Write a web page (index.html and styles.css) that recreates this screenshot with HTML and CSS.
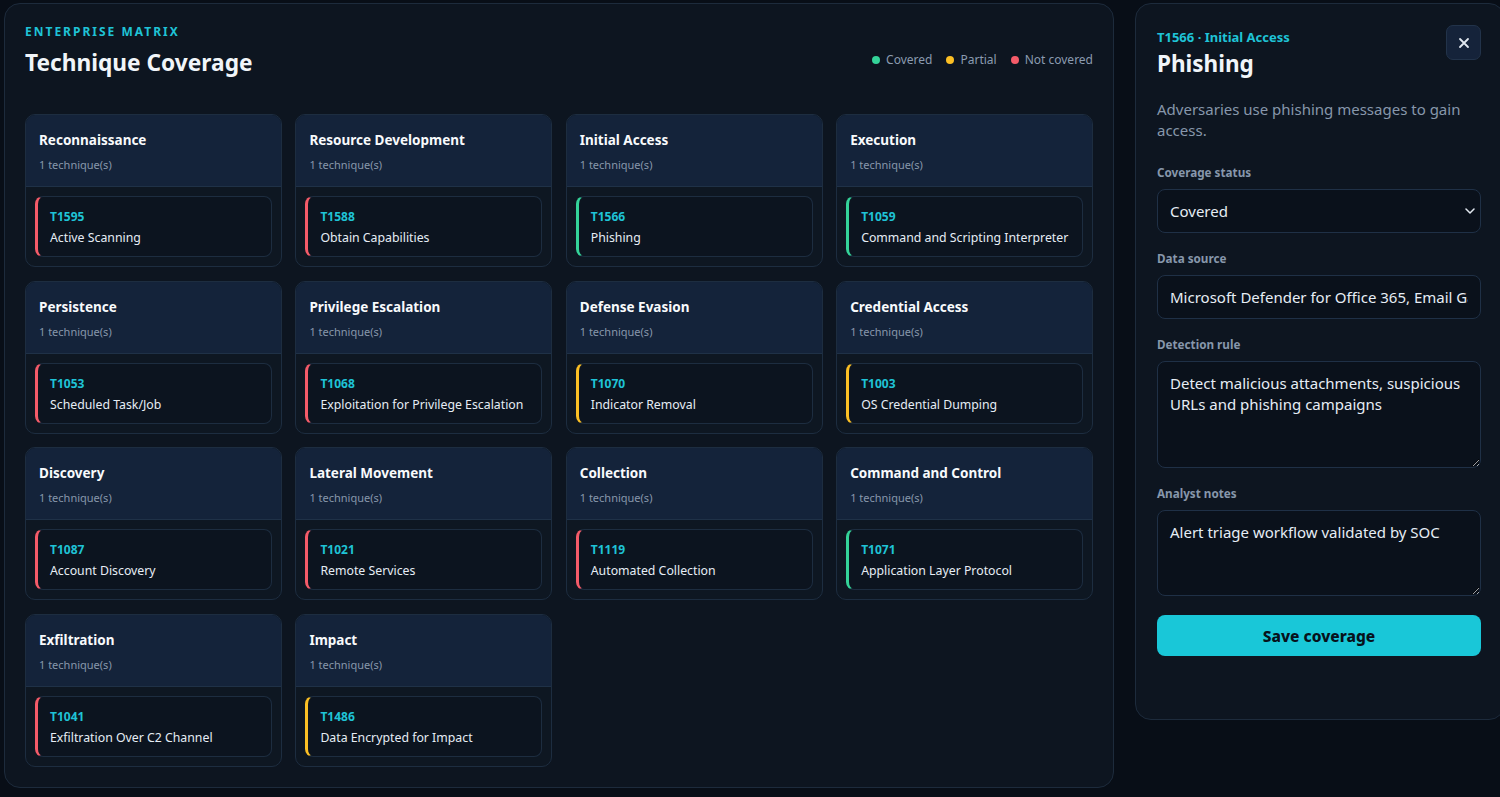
FILE: index.html
```html
<!DOCTYPE html>
<html lang="en">
<head>
<meta charset="utf-8">
<title>Technique Coverage</title>
<link rel="stylesheet" href="styles.css">
</head>
<body>
<div class="layout">
  <main class="matrix">
    <header class="matrix-head">
      <div class="titles">
        <div class="eyebrow">ENTERPRISE MATRIX</div>
        <h1 class="title">Technique Coverage</h1>
      </div>
      <ul class="legend">
        <li><span class="dot dot-green"></span>Covered</li>
        <li><span class="dot dot-yellow"></span>Partial</li>
        <li><span class="dot dot-red"></span>Not covered</li>
      </ul>
    </header>
    <section class="grid">
      <div class="tactic">
        <div class="tactic-head"><div class="tactic-name">Reconnaissance</div><div class="tactic-count">1 technique(s)</div></div>
        <div class="tactic-body"><div class="tech st-red"><div class="tech-id">T1595</div><div class="tech-name">Active Scanning</div></div></div>
      </div>
      <div class="tactic">
        <div class="tactic-head"><div class="tactic-name">Resource Development</div><div class="tactic-count">1 technique(s)</div></div>
        <div class="tactic-body"><div class="tech st-red"><div class="tech-id">T1588</div><div class="tech-name">Obtain Capabilities</div></div></div>
      </div>
      <div class="tactic">
        <div class="tactic-head"><div class="tactic-name">Initial Access</div><div class="tactic-count">1 technique(s)</div></div>
        <div class="tactic-body"><div class="tech st-green"><div class="tech-id">T1566</div><div class="tech-name">Phishing</div></div></div>
      </div>
      <div class="tactic">
        <div class="tactic-head"><div class="tactic-name">Execution</div><div class="tactic-count">1 technique(s)</div></div>
        <div class="tactic-body"><div class="tech st-green"><div class="tech-id">T1059</div><div class="tech-name">Command and Scripting Interpreter</div></div></div>
      </div>
      <div class="tactic">
        <div class="tactic-head"><div class="tactic-name">Persistence</div><div class="tactic-count">1 technique(s)</div></div>
        <div class="tactic-body"><div class="tech st-red"><div class="tech-id">T1053</div><div class="tech-name">Scheduled Task/Job</div></div></div>
      </div>
      <div class="tactic">
        <div class="tactic-head"><div class="tactic-name">Privilege Escalation</div><div class="tactic-count">1 technique(s)</div></div>
        <div class="tactic-body"><div class="tech st-red"><div class="tech-id">T1068</div><div class="tech-name">Exploitation for Privilege Escalation</div></div></div>
      </div>
      <div class="tactic">
        <div class="tactic-head"><div class="tactic-name">Defense Evasion</div><div class="tactic-count">1 technique(s)</div></div>
        <div class="tactic-body"><div class="tech st-yellow"><div class="tech-id">T1070</div><div class="tech-name">Indicator Removal</div></div></div>
      </div>
      <div class="tactic">
        <div class="tactic-head"><div class="tactic-name">Credential Access</div><div class="tactic-count">1 technique(s)</div></div>
        <div class="tactic-body"><div class="tech st-yellow"><div class="tech-id">T1003</div><div class="tech-name">OS Credential Dumping</div></div></div>
      </div>
      <div class="tactic">
        <div class="tactic-head"><div class="tactic-name">Discovery</div><div class="tactic-count">1 technique(s)</div></div>
        <div class="tactic-body"><div class="tech st-red"><div class="tech-id">T1087</div><div class="tech-name">Account Discovery</div></div></div>
      </div>
      <div class="tactic">
        <div class="tactic-head"><div class="tactic-name">Lateral Movement</div><div class="tactic-count">1 technique(s)</div></div>
        <div class="tactic-body"><div class="tech st-red"><div class="tech-id">T1021</div><div class="tech-name">Remote Services</div></div></div>
      </div>
      <div class="tactic">
        <div class="tactic-head"><div class="tactic-name">Collection</div><div class="tactic-count">1 technique(s)</div></div>
        <div class="tactic-body"><div class="tech st-red"><div class="tech-id">T1119</div><div class="tech-name">Automated Collection</div></div></div>
      </div>
      <div class="tactic">
        <div class="tactic-head"><div class="tactic-name">Command and Control</div><div class="tactic-count">1 technique(s)</div></div>
        <div class="tactic-body"><div class="tech st-green"><div class="tech-id">T1071</div><div class="tech-name">Application Layer Protocol</div></div></div>
      </div>
      <div class="tactic">
        <div class="tactic-head"><div class="tactic-name">Exfiltration</div><div class="tactic-count">1 technique(s)</div></div>
        <div class="tactic-body"><div class="tech st-red"><div class="tech-id">T1041</div><div class="tech-name">Exfiltration Over C2 Channel</div></div></div>
      </div>
      <div class="tactic">
        <div class="tactic-head"><div class="tactic-name">Impact</div><div class="tactic-count">1 technique(s)</div></div>
        <div class="tactic-body"><div class="tech st-yellow"><div class="tech-id">T1486</div><div class="tech-name">Data Encrypted for Impact</div></div></div>
      </div>
    </section>
  </main>

  <aside class="detail">
    <div class="detail-head">
      <div>
        <div class="detail-meta">T1566 · Initial Access</div>
        <h2 class="detail-title">Phishing</h2>
      </div>
      <button class="close" type="button" aria-label="Close">
        <svg width="12" height="12" viewBox="0 0 12 12"><path d="M2 2L10 10M10 2L2 10" stroke="#e2e8f0" stroke-width="1.8" stroke-linecap="round"/></svg>
      </button>
    </div>
    <p class="detail-desc">Adversaries use phishing messages to gain access.</p>

    <label class="field-label first" for="status">Coverage status</label>
    <div class="select-wrap">
      <select id="status" class="control select">
        <option selected>Covered</option>
        <option>Partial</option>
        <option>Not covered</option>
      </select>
      <svg class="chevron" width="10" height="6" viewBox="0 0 10 6"><path d="M1 1l4 4 4-4" fill="none" stroke="#e2e8f0" stroke-width="1.5" stroke-linecap="round" stroke-linejoin="round"/></svg>
    </div>

    <label class="field-label" for="source">Data source</label>
    <input id="source" class="control" type="text" value="Microsoft Defender for Office 365, Email Gateway">

    <label class="field-label" for="rule">Detection rule</label>
    <textarea id="rule" class="control area area-rule">Detect malicious attachments, suspicious URLs and phishing campaigns</textarea>

    <label class="field-label" for="notes">Analyst notes</label>
    <textarea id="notes" class="control area area-notes">Alert triage workflow validated by SOC</textarea>

    <button class="save" type="button">Save coverage</button>
  </aside>
</div>
</body>
</html>
```

FILE: styles.css
```css
* { box-sizing: border-box; }
html, body { margin: 0; padding: 0; overflow: hidden; }
body {
  background: #080e17;
  font-family: "Noto Sans", "Open Sans", "Liberation Sans", sans-serif;
  color: #e6edf5;
  width: 1500px;
  height: 797px;
}
.layout {
  display: flex;
  align-items: flex-start;
  gap: 21px;
  padding: 3px 0 0 4px;
  width: 1520px;
}
.matrix {
  flex: 0 0 1110px;
  background: #0d1520;
  border: 1px solid #1d2b3c;
  border-radius: 16px;
  padding: 20px;
}
.matrix-head {
  display: flex;
  justify-content: space-between;
  align-items: flex-end;
  margin-bottom: 35px;
}
.eyebrow {
  font-size: 12px;
  line-height: 16px;
  font-weight: 700;
  letter-spacing: 2px;
  color: #1fc3d6;
}
.title {
  margin: 7px 0 0;
  font-size: 22.7px;
  line-height: 32px;
  font-weight: 700;
  color: #f1f5f9;
}
.legend {
  list-style: none;
  margin: 0 0 11px;
  padding: 0;
  display: flex;
  gap: 14px;
  font-size: 12px;
  line-height: 16px;
  color: #8b9bb0;
}
.legend li { display: flex; align-items: center; gap: 6px; }
.dot { width: 8px; height: 8px; border-radius: 50%; display: inline-block; }
.dot-green { background: #34d399; }
.dot-yellow { background: #fbbf24; }
.dot-red { background: #f45b69; }

.grid {
  display: grid;
  grid-template-columns: repeat(4, 1fr);
  gap: 13.5px;
}
.tactic {
  border: 1px solid #1d2d40;
  border-radius: 10px;
  background: #0e1722;
  overflow: hidden;
}
.tactic-head {
  background: #14233a;
  padding: 15px 13px 13px;
  border-bottom: 1px solid #1f3147;
}
.tactic-name {
  font-size: 13.5px;
  line-height: 20px;
  font-weight: 700;
  color: #f8fafc;
}
.tactic-count {
  margin-top: 7px;
  font-size: 11px;
  line-height: 16px;
  color: #8797ab;
}
.tactic-body { padding: 9px; }
.tech {
  border: 1px solid #1d2d40;
  border-left: 3px solid #f45b69;
  border-radius: 8px;
  background: #0c141f;
  padding: 12px 8px 9px 12px;
}
.st-red { border-left-color: #f45b69; }
.st-green { border-left-color: #34d399; }
.st-yellow { border-left-color: #fbbf24; }
.tech-id {
  font-size: 12px;
  line-height: 16px;
  font-weight: 700;
  color: #1fc3d6;
}
.tech-name {
  margin-top: 4px;
  font-size: 12.3px;
  line-height: 18px;
  color: #e6edf5;
  white-space: nowrap;
}

.detail {
  flex: 0 0 370px;
  background: #0d1520;
  border: 1px solid #1d2b3c;
  border-radius: 16px;
  padding: 24px 23px 63px 21px;
  display: flex;
  flex-direction: column;
}
.detail-head {
  display: flex;
  justify-content: space-between;
  align-items: flex-start;
}
.detail-meta {
  font-size: 13px;
  line-height: 18px;
  font-weight: 700;
  color: #1fc3d6;
}
.detail-title {
  margin: 3px 0 0;
  font-size: 22.5px;
  line-height: 30px;
  font-weight: 700;
  color: #f1f5f9;
}
.close {
  margin-top: -3px;
  width: 35px;
  height: 35px;
  border-radius: 7px;
  border: 1px solid #22334a;
  background: #15233a;
  display: flex;
  align-items: center;
  justify-content: center;
  padding: 0;
  cursor: pointer;
}
.detail-desc {
  margin: 20px 0 0;
  font-size: 15px;
  line-height: 21px;
  color: #8797ab;
}
.field-label {
  display: block;
  margin-top: 17px;
  margin-bottom: 9px;
  font-size: 11.7px;
  line-height: 16px;
  font-weight: 700;
  color: #8797ab;
}
.field-label.first { margin-top: 23px; }
.control {
  display: block;
  width: 100%;
  height: 44px;
  background: #0a111b;
  border: 1px solid #1f3046;
  border-radius: 8px;
  color: #e6edf5;
  font-family: inherit;
  font-size: 15px;
  padding: 0 12px;
  outline: none;
}
.select-wrap { position: relative; }
.select { appearance: none; -webkit-appearance: none; }
.chevron { position: absolute; right: 6px; top: 19px; pointer-events: none; }
.area {
  padding: 11px 12px;
  line-height: 21px;
  resize: vertical;
}
.area-rule { height: 107px; }
.area-notes { height: 86px; }
.save {
  margin-top: 19px;
  height: 41px;
  border: 0;
  border-radius: 8px;
  background: #19c7d8;
  color: #07121c;
  font-family: inherit;
  font-size: 15.5px;
  font-weight: 800;
  cursor: pointer;
}
```
